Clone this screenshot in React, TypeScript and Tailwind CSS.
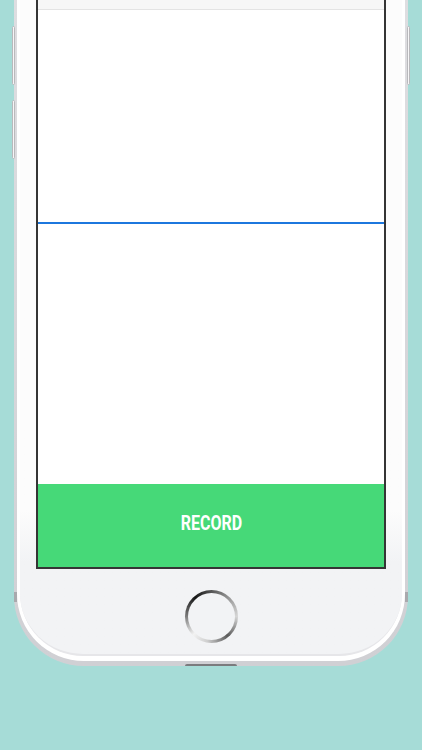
import React from 'react';

const SideButton: React.FC<{ className: string }> = ({ className }) => (
  <div className={`absolute w-[3px] rounded-full border border-[#b9b9bc] bg-[#f6f6f7] ${className}`} />
);

const HomeButton: React.FC = () => (
  <div className="mx-auto mt-[21px] h-[53px] w-[53px] rounded-full bg-[conic-gradient(from_0deg,#555,#9a9a9a_45deg,#d6d6d6_90deg,#5a5a5a_140deg,#cfcfcf_190deg,#f2f2f2_225deg,#707070_275deg,#151515_320deg,#555)] p-[3px]">
    <div className="h-full w-full rounded-full bg-[#f2f3f5]" />
  </div>
);

const Screen: React.FC = () => (
  <div className="flex h-[569px] flex-col border-x-2 border-b-2 border-[#353535] bg-white">
    <div className="h-[10px] border-b border-[#e4e4e4] bg-[#f7f7f7]" />
    <div className="h-[212px]" />
    <div className="h-[2px] bg-[#1c77de]" />
    <div className="flex-1" />
    <button className="flex h-[83px] items-center justify-center bg-[#46d978] pb-[6px] text-white">
      <span className="inline-block scale-x-[0.8] text-[20px] leading-none font-bold [font-family:Roboto,'Liberation_Sans',sans-serif]">
        RECORD
      </span>
    </button>
  </div>
);

export default function App() {
  return (
    <div className="h-[750px] w-full overflow-hidden bg-[#a6dcd7]">
      <div className="relative ml-[14px] h-[666px] w-[394px]">
        <SideButton className="left-[-2px] top-[26px] h-[59px]" />
        <SideButton className="left-[-2px] top-[100px] h-[59px]" />
        <SideButton className="right-[-2px] top-[26px] h-[59px]" />

        <div className="h-full rounded-b-[70px] bg-gradient-to-b from-[#dedee1] to-[#d0d0d4] px-[3px] pb-[5px]">
          <div className="h-full rounded-b-[67px] bg-white px-[3px] pb-[5px]">
            <div className="h-full rounded-b-[63px] border-b-2 border-[#e6e6e9] bg-gradient-to-b from-[#fcfcfc] from-[78%] to-[#f2f3f5] to-[86%] px-[16px]">
              <Screen />
              <HomeButton />
            </div>
          </div>
        </div>

        <div className="absolute left-0 top-[592px] h-[10px] w-[3px] bg-[#a9a9ad]" />
        <div className="absolute right-0 top-[592px] h-[10px] w-[3px] bg-[#a9a9ad]" />
        <div className="absolute bottom-0 left-1/2 h-[2px] w-[52px] -translate-x-1/2 rounded-t-full bg-[#7b7b7e]" />
      </div>
    </div>
  );
}
